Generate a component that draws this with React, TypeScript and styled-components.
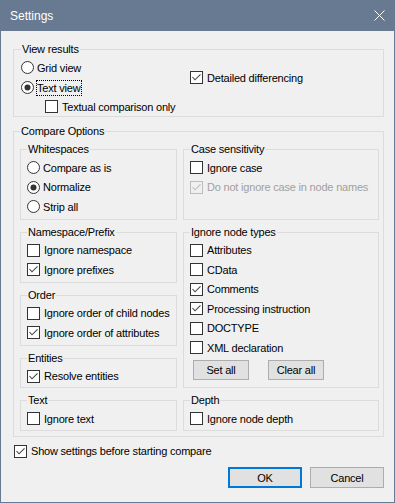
import React from "react";
import styled, { createGlobalStyle } from "styled-components";

const GlobalStyle = createGlobalStyle`
  html, body {
    margin: 0;
    padding: 0;
    background: #f0f0f0;
  }
  body {
    font-family: "Liberation Sans", Arial, sans-serif;
    font-size: 11px;
    letter-spacing: -0.2px;
    color: #000;
  }
`;

const Window = styled.div`
  width: 395px;
  height: 503px;
  box-sizing: border-box;
  border: 1px solid #687a91;
  border-top: none;
  display: flex;
  flex-direction: column;
  background: #f0f0f0;
`;

const TitleBar = styled.div`
  height: 31px;
  flex: none;
  background: #687a91;
  display: flex;
  align-items: center;
  justify-content: space-between;
  padding: 0 9px;
  color: #fff;
  font-size: 12px;
  letter-spacing: 0;
`;

const Body = styled.div`
  flex: 1;
  display: flex;
  flex-direction: column;
  padding: 12px 10px 0 12px;
`;

const Group = styled.fieldset<{ $padTop?: number; $padBottom?: number; $padLeft?: number }>`
  margin: 0;
  min-width: 0;
  border: 1px solid #dcdcdc;
  padding: ${(p) => p.$padTop ?? 2}px 4px ${(p) => p.$padBottom ?? 2}px ${(p) => p.$padLeft ?? 6}px;
  display: flex;
  flex-direction: column;
`;

const Legend = styled.legend`
  padding: 0 1px;
  height: 13px;
  line-height: 13px;
`;

const ViewGrid = styled.div`
  display: grid;
  grid-template-columns: 169px 1fr;
  grid-template-rows: 20px 19px 19px;
`;

const Side = styled.div`
  grid-column: 2;
  grid-row: 1 / span 2;
  display: flex;
  align-items: center;
`;

const Columns = styled.div`
  display: grid;
  grid-template-columns: 157px 196px;
  column-gap: 6px;
  row-gap: 6px;
`;

const Stack = styled.div`
  display: flex;
  flex-direction: column;
  gap: 6px;
`;

const Option = styled.label<{ $indent?: number; $disabled?: boolean; $gap?: number }>`
  display: flex;
  align-items: center;
  height: 19.5px;
  gap: ${(p) => p.$gap ?? 4}px;
  padding-left: ${(p) => p.$indent ?? 0}px;
  color: ${(p) => (p.$disabled ? "#a0a0a0" : "#000")};
  white-space: nowrap;
`;

const Focus = styled.span`
  outline: 1px dotted #000;
  outline-offset: 0;
  padding: 1px 1px 0 0;
  line-height: 13px;
`;

const Box = styled.span<{ $disabled?: boolean }>`
  flex: none;
  width: 13px;
  height: 13px;
  box-sizing: border-box;
  border: 1px solid ${(p) => (p.$disabled ? "#bcbcbc" : "#333")};
  background: ${(p) => (p.$disabled ? "#f0f0f0" : "#fff")};
  display: flex;
`;

const Row = styled.div<{ $top?: number; $left?: number; $gap?: number; $end?: boolean }>`
  display: flex;
  justify-content: ${(p) => (p.$end ? "flex-end" : "flex-start")};
  gap: ${(p) => p.$gap ?? 0}px;
  margin-top: ${(p) => p.$top ?? 0}px;
  padding-left: ${(p) => p.$left ?? 0}px;
`;

const Button = styled.button<{ $width: number; $height: number; $primary?: boolean }>`
  width: ${(p) => p.$width}px;
  height: ${(p) => p.$height}px;
  box-sizing: border-box;
  margin: 0;
  padding: 0;
  font-family: inherit;
  font-size: 11px;
  letter-spacing: inherit;
  color: #000;
  background: #e1e1e1;
  border: ${(p) => (p.$primary ? "2px solid #0078d7" : "1px solid #adadad")};
`;

const Check = (props: { label: string; checked?: boolean; disabled?: boolean; indent?: number }) => {
  const color = props.disabled ? "#bcbcbc" : "#444";
  return (
    <Option $indent={props.indent} $disabled={props.disabled}>
      <Box $disabled={props.disabled}>
        {props.checked && (
          <svg width="11" height="11" viewBox="0 0 11 11">
            <polyline points="1.5,5 4,7.8 9.5,2.3" fill="none" stroke={color} strokeWidth="1.1" />
          </svg>
        )}
      </Box>
      <span>{props.label}</span>
    </Option>
  );
};

const Radio = (props: { label: string; checked?: boolean; focused?: boolean }) => {
  return (
    <Option $gap={3}>
      <svg width="13" height="13" viewBox="0 0 13 13" style={{ flex: "none" }}>
        <circle cx="6.5" cy="6.5" r="6" fill="#fff" stroke="#333" />
        {props.checked && <circle cx="6.5" cy="6.5" r="3" fill="#333" />}
      </svg>
      {props.focused ? <Focus>{props.label}</Focus> : <span>{props.label}</span>}
    </Option>
  );
};

export default function App() {
  return (
    <>
      <GlobalStyle />
      <Window>
        <TitleBar>
          <span>Settings</span>
          <svg width="11" height="11" viewBox="0 0 11 11">
            <path d="M0.5 0.5 L10.5 10.5 M10.5 0.5 L0.5 10.5" stroke="#fff" strokeWidth="1" />
          </svg>
        </TitleBar>
        <Body>
          <Group $padTop={2} $padBottom={0} $padLeft={7}>
            <Legend>View results</Legend>
            <ViewGrid>
              <Radio label="Grid view" />
              <Side>
                <Check label="Detailed differencing" checked />
              </Side>
              <Radio label="Text view" checked focused />
              <Check label="Textual comparison only" indent={24} />
            </ViewGrid>
          </Group>

          <Row $top={8}>
            <Group $padTop={5} $padBottom={5} style={{ flex: 1 }}>
              <Legend>Compare Options</Legend>
              <Columns>
                <Group>
                  <Legend>Whitespaces</Legend>
                  <Radio label="Compare as is" />
                  <Radio label="Normalize" checked />
                  <Radio label="Strip all" />
                </Group>
                <Group>
                  <Legend>Case sensitivity</Legend>
                  <Check label="Ignore case" />
                  <Check label="Do not ignore case in node names" checked disabled />
                </Group>

                <Stack>
                  <Group>
                    <Legend>Namespace/Prefix</Legend>
                    <Check label="Ignore namespace" />
                    <Check label="Ignore prefixes" checked />
                  </Group>
                  <Group>
                    <Legend>Order</Legend>
                    <Check label="Ignore order of child nodes" />
                    <Check label="Ignore order of attributes" checked />
                  </Group>
                  <Group $padBottom={1}>
                    <Legend>Entities</Legend>
                    <Check label="Resolve entities" checked />
                  </Group>
                </Stack>
                <Group>
                  <Legend>Ignore node types</Legend>
                  <Check label="Attributes" />
                  <Check label="CData" />
                  <Check label="Comments" checked />
                  <Check label="Processing instruction" checked />
                  <Check label="DOCTYPE" />
                  <Check label="XML declaration" />
                  <Row $top={2} $left={3} $gap={19}>
                    <Button $width={56} $height={20}>Set all</Button>
                    <Button $width={56} $height={20}>Clear all</Button>
                  </Row>
                </Group>

                <Group $padBottom={1}>
                  <Legend>Text</Legend>
                  <Check label="Ignore text" />
                </Group>
                <Group $padBottom={1}>
                  <Legend>Depth</Legend>
                  <Check label="Ignore node depth" />
                </Group>
              </Columns>
            </Group>
          </Row>

          <Row $top={5} $left={1}>
            <Check label="Show settings before starting compare" checked />
          </Row>

          <Row $top={6} $gap={8} $end>
            <Button $width={74} $height={21} $primary>OK</Button>
            <Button $width={74} $height={21}>Cancel</Button>
          </Row>
        </Body>
      </Window>
    </>
  );
}
